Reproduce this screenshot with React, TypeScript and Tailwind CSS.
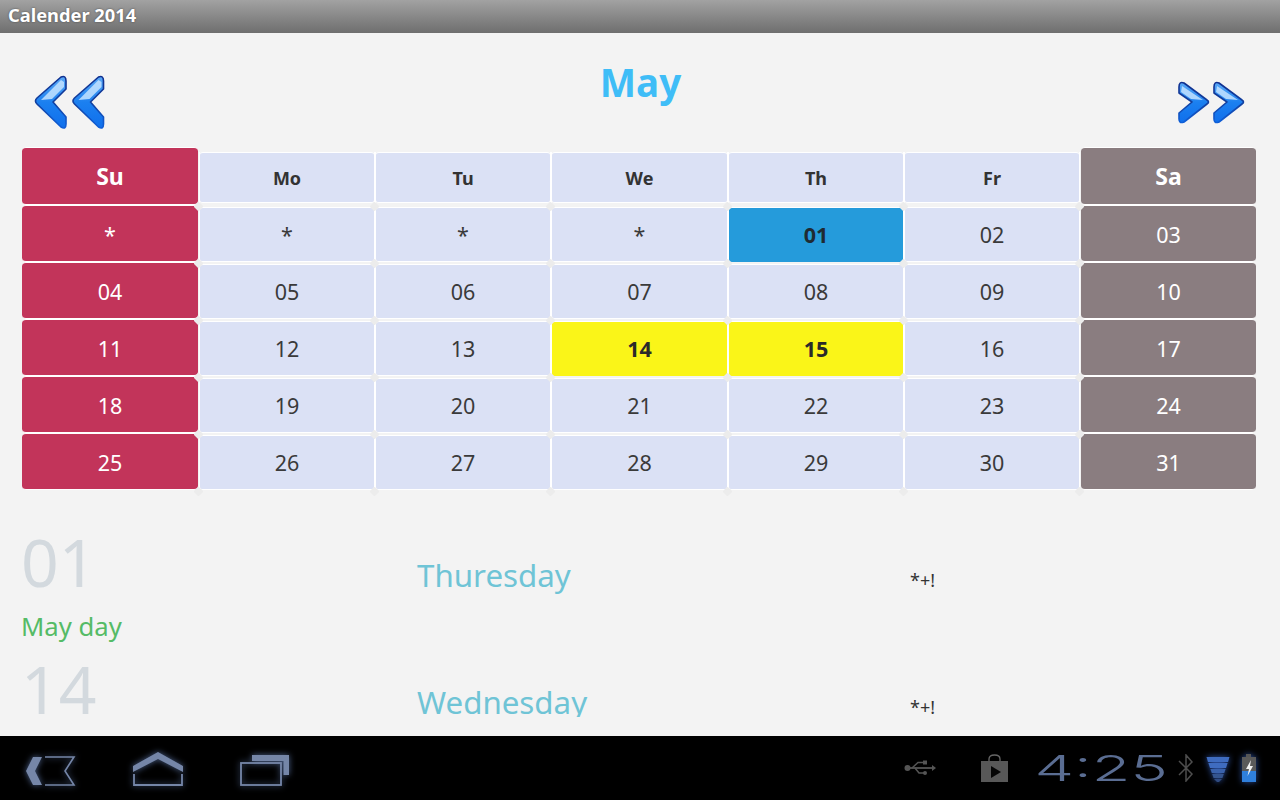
import React from "react";

const rows = [
  ["*", "*", "*", "*", "01", "02", "03"],
  ["04", "05", "06", "07", "08", "09", "10"],
  ["11", "12", "13", "14", "15", "16", "17"],
  ["18", "19", "20", "21", "22", "23", "24"],
  ["25", "26", "27", "28", "29", "30", "31"],
];
const heads = ["Su", "Mo", "Tu", "We", "Th", "Fr", "Sa"];

function Dot() {
  return <span className="absolute -right-[4px] -bottom-[5px] z-10 h-[7px] w-[7px] rotate-45 rounded-[1px] bg-[#ececec]" />;
}

function Cell({ text, col, head }: { text: string; col: number; head?: boolean }) {
  const weekend = col === 0 || col === 6;
  const blue = text === "01";
  const yellow = text === "14" || text === "15";
  let box = "mt-[2px] h-[55px] border-y border-white bg-[#dbe1f5] text-[#3a3a3a] rounded-[3px] font-normal";
  if (col === 0) box = "h-[57px] border-y border-white bg-[#c2345a] pt-[2px] text-white rounded-[4px]";
  if (col === 6) box = "h-[57px] border-y border-white bg-[#8a7d80] pt-[2px] text-white rounded-[4px]";
  if (blue) box = "mt-[2px] h-[55px] border-t border-white bg-[#259bdb] text-[#1f2a33] font-bold rounded-[3px]";
  if (yellow) box = "mt-[2px] h-[55px] border-t border-white bg-[#faf518] text-[#2a2a2a] font-bold rounded-[3px]";
  if (head) {
    box = weekend
      ? (col === 0 ? "bg-[#c2345a]" : "bg-[#8a7d80]") + " -mt-px h-[58px] border-y border-white text-white rounded-[4px] font-bold text-[23px]"
      : "h-[51px] border-y border-white bg-[#dbe1f5] text-[#333333] rounded-[3px] font-bold text-[18px]";
  }
  const wrap = weekend
    ? "relative h-full " + (col === 0 ? "mr-px" : "ml-px")
    : "relative border-x border-white " + (head ? "mt-[4px] h-[53px]" : "h-full");
  return (
    <div className={wrap}>
      <div className={box + " flex items-center justify-center"}>{text}</div>
      {col < 6 && <Dot />}
    </div>
  );
}

function Chevron({ dx, dir }: { dx: number; dir: "l" | "r" }) {
  const left = "M27 1 L3 22 Q0 25 3 28 L27 51 Q32 54 32 48 V41 L19 26 L32 13 V5 Q32 -1 27 1 Z";
  const right = "M5 1 L28 18 Q31 20 28 22 L5 40 Q0 42 0 37 V31 L13 20 L0 11 V5 Q0 -1 5 1 Z";
  return (
    <g transform={`translate(${dx} 1)`}>
      <path d={dir === "l" ? left : right} fill={`url(#f${dir})`} stroke={`url(#s${dir})`} strokeWidth="1.6" strokeLinejoin="round" />
      <path d={dir === "l" ? "M27 4 L7 24 L18 23 L30 11 V6 Z" : "M3 4 L24 18 L12 17 L2 10 Z"} fill="#c4e3ff" opacity="0.85" />
    </g>
  );
}

function Arrows({ dir }: { dir: "l" | "r" }) {
  const w = dir === "l" ? 74 : 68;
  const h = dir === "l" ? 56 : 46;
  return (
    <svg width={w} height={h} viewBox={`0 0 ${w} ${h}`}>
      <defs>
        <linearGradient id={`f${dir}`} x1="0" y1="0" x2="0" y2="1">
          <stop offset="0" stopColor="#5aa8f6" />
          <stop offset="0.5" stopColor="#1b80f0" />
          <stop offset="1" stopColor="#0f6fec" />
        </linearGradient>
        <linearGradient id={`s${dir}`} x1="0" y1="0" x2="0" y2="1">
          <stop offset="0" stopColor="#0f2f8f" />
          <stop offset="0.5" stopColor="#123f9e" />
          <stop offset="1" stopColor="#0f5fd8" />
        </linearGradient>
      </defs>
      <Chevron dx={1} dir={dir} />
      <Chevron dx={dir === "l" ? 38.5 : 36} dir={dir} />
    </svg>
  );
}

function Detail({ num, day, label, clip }: { num: string; day: string; label?: string; clip?: boolean }) {
  return (
    <div className="flex h-[127px] shrink-0">
      <div className="w-[396px] shrink-0">
        <div className="h-[82px] text-[66px] leading-[82px] text-[#d3d9de]">{num}</div>
        {label && <div className="mt-[7px] text-[25.7px] leading-[36px] text-[#55bb66]">{label}</div>}
      </div>
      <div className={(clip ? "h-[70px] overflow-hidden " : "") + "w-[493px] shrink-0 pt-[33px] text-[31.3px] leading-[44px] text-[#6fc4d6]"}>{day}</div>
      <div className="pt-[46px] text-[18px] leading-[28px] text-[#333333]">*+!</div>
    </div>
  );
}

const glow = { filter: "drop-shadow(0 0 3px rgba(110,140,200,.7))" };

function NavIcons() {
  const c = "#7586a8";
  return (
    <div className="flex items-center">
      <svg className="ml-[24px]" width="54" height="36" viewBox="0 0 54 36" fill="none" style={glow}>
        <path d="M9 7 H18 L11 21 L18 35 H9 L2 21 Z" fill={c} />
        <path d="M21 7 H50 L41 21 L50 35 H21" stroke={c} strokeWidth="1.6" />
      </svg>
      <svg className="ml-[54px]" width="54" height="38" viewBox="0 0 54 38" fill="none" style={glow}>
        <path d="M1 17 L26 3 L51 17 V23 L26 10 L1 23 Z" fill={c} />
        <path d="M2 25 V36 H50 V25" stroke={c} strokeWidth="1.8" />
      </svg>
      <svg className="ml-[54px]" width="52" height="36" viewBox="0 0 52 36" fill="none" style={glow}>
        <path d="M12 5 H49 V25 H43.5 V11 H12 Z" fill={c} />
        <rect x="1" y="13" width="40" height="22" stroke={c} strokeWidth="1.8" />
      </svg>
    </div>
  );
}

function StatusIcons() {
  return (
    <div className="flex items-center">
      <svg width="32" height="16" viewBox="0 0 32 16" fill="none">
        <circle cx="3.5" cy="8" r="3" fill="#555" />
        <path d="M3 8 H30" stroke="#555" strokeWidth="1.8" />
        <path d="M8 8 L14 2.5 H20 M11 8 L15 13 H20" stroke="#555" strokeWidth="1.5" />
        <rect x="19" y="0.5" width="4" height="4" fill="#555" />
        <circle cx="21" cy="13" r="2" fill="#555" />
        <path d="M28 5 L32 8 L28 11 Z" fill="#555" />
      </svg>
      <svg className="ml-[45px]" width="27" height="28" viewBox="0 0 27 28" fill="none">
        <path d="M8 9 V5 Q8 1 13.5 1 Q19 1 19 5 V9" stroke="#666" strokeWidth="1.3" />
        <path d="M0 7 H27 V28 H0 Z" fill="#585858" />
        <path d="M10 12 L20 18 L10 24 Z" fill="#050505" />
      </svg>
      <div className="ml-[28px] flex h-[28px] w-[131px] items-center justify-center overflow-visible">
        <span className="inline-block origin-center scale-x-[1.75] text-[36px] font-light leading-none text-[#5a6d92] [font-family:Inter,sans-serif]">
          4:25
        </span>
      </div>
      <svg className="ml-[11px]" width="16" height="28" viewBox="0 0 16 28" fill="none">
        <path d="M1 7 L14 20 L8 27 V1 L14 8 L1 21" stroke="#4d4d4d" strokeWidth="1.5" />
      </svg>
      <svg className="ml-[12px]" width="24" height="28" viewBox="0 0 24 28" style={{ filter: "drop-shadow(0 0 3px rgba(60,110,220,.8))" }}>
        <path d="M0.5 3 H23.5 L22 8 H2 Z" fill="#3f6cc0" />
        <path d="M2.4 9 H21.6 L20 14 H4 Z" fill="#3f6cc0" />
        <path d="M4.4 15 H19.6 L18.2 19 H5.8 Z" fill="#3a62ac" />
        <path d="M6.2 20 H17.8 L16.4 24 H7.6 Z" fill="#35558f" />
        <path d="M8 25 H16 L12 29 Z" fill="#2f4a80" />
      </svg>
      <svg className="ml-[11px]" width="15" height="30" viewBox="0 0 15 30" style={{ filter: "drop-shadow(0 0 3px rgba(60,110,220,.7))" }}>
        <rect x="5" y="1" width="5" height="3" fill="#555" />
        <rect x="1" y="4" width="14" height="14" fill="#5a5a5a" />
        <rect x="1" y="18" width="14" height="11" fill="#2f7fdc" />
        <path d="M10 7 L5 16 H8 L6.5 23 L12 13 H9 Z" fill="#f0f0f0" />
      </svg>
    </div>
  );
}

export default function App() {
  return (
    <div className="flex h-[800px] w-[1280px] flex-col overflow-hidden bg-[#f3f3f3] [font-family:'Noto_Sans',sans-serif]">
      <div className="flex h-[33px] shrink-0 items-center bg-gradient-to-b from-[#a2a2a2] to-[#6f6f6f] pb-[3px] pl-[8px] text-[18.3px] font-bold text-white [text-shadow:0_0_2px_#444]">
        Calender 2014
      </div>
      <div className="min-h-0 flex-1 overflow-hidden">
        <div className="flex h-[115px] justify-between pl-[33px] pr-[34px]">
          <div className="pt-[42px]"><Arrows dir="l" /></div>
          <div className="pr-[4px] pt-[22px] text-[38.5px] font-bold leading-[54px] text-[#3fbdf7]">May</div>
          <div className="pt-[48px]"><Arrows dir="r" /></div>
        </div>
        <div className="mx-[22px] grid w-[1234px] grid-cols-[177px_176px_176px_177px_176px_176px_176px] grid-rows-[57px_57px_57px_57px_57px_57px] text-[21.5px] leading-none">
          {heads.map((h, i) => (
            <Cell key={h} text={h} col={i} head />
          ))}
          {rows.map((r, ri) =>
            r.map((t, ci) => <Cell key={ri + "-" + ci} text={t} col={ci} />)
          )}
        </div>
        <div className="mt-[30px] pl-[21px]">
          <Detail num="01" day="Thuresday" label="May day" />
          <Detail num="14" day="Wednesday" clip />
        </div>
      </div>
      <div className="flex h-[64px] shrink-0 items-center justify-between bg-black pr-[24px]">
        <NavIcons />
        <StatusIcons />
      </div>
    </div>
  );
}
